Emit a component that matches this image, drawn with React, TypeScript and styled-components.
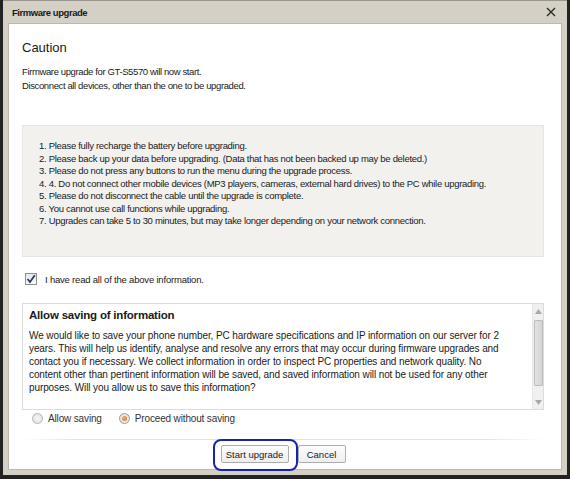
import React from 'react';
import styled, { createGlobalStyle } from 'styled-components';

const GlobalStyle = createGlobalStyle`
  html, body {
    margin: 0;
    padding: 0;
    background: #1f1f1f;
  }
  * {
    box-sizing: border-box;
  }
`;

const font = `"Liberation Sans", Arial, sans-serif`;

const Screen = styled.div`
  width: 570px;
  height: 479px;
  padding: 0 3px 4px 3px;
  background: #222222;
  font-family: ${font};
  color: #1a1a1a;
`;

const Frame = styled.div`
  display: flex;
  flex-direction: column;
  height: 100%;
  padding: 0 5px 5px 5px;
  background: #d5d0c6;
  border-top: 1px solid #9a968e;
`;

const TitleBar = styled.div`
  display: flex;
  align-items: center;
  justify-content: space-between;
  height: 22px;
  padding: 0 4px 0 4px;
  font-size: 9.5px;
  letter-spacing: -0.45px;
  font-weight: bold;
`;

const CloseButton = styled.button`
  display: flex;
  align-items: center;
  justify-content: center;
  width: 14px;
  height: 14px;
  padding: 0;
  border: none;
  background: transparent;
`;

const Content = styled.div`
  flex: 1;
  display: flex;
  flex-direction: column;
  padding: 0 17px 0 13px;
  background: #ffffff;
  border: 1px solid #bdb8ad;
`;

const Heading = styled.h1`
  margin: 15px 0 0 0;
  font-size: 13px;
  line-height: 18px;
  font-weight: normal;
`;

const Intro = styled.p`
  margin: 8px 0 0 0;
  font-size: 9.5px;
  letter-spacing: -0.38px;
  line-height: 14px;
`;

const NoticeBox = styled.ol`
  margin: 32px 0 0 0;
  height: 132px;
  padding: 14px 0 0 16px;
  list-style: none;
  background: #f2f1ee;
  border: 1px solid #e8e6e1;
  font-size: 9.5px;
  letter-spacing: -0.3px;
  line-height: 12.5px;
`;

const CheckRow = styled.label`
  display: flex;
  align-items: center;
  gap: 8px;
  height: 16px;
  margin: 14px 0 0 3px;
  font-size: 9.5px;
  letter-spacing: -0.2px;
`;

const CheckBox = styled.span`
  display: flex;
  align-items: center;
  justify-content: center;
  width: 12px;
  height: 12px;
  border: 1px solid #8f8f8f;
  background: linear-gradient(#e6e6e6, #fbfbfb);
`;

const InfoBox = styled.div`
  display: grid;
  grid-template-columns: 1fr 11px;
  height: 107px;
  margin-top: 16px;
  border: 1px solid #dcdcdc;
`;

const InfoText = styled.div`
  padding: 2px 8px 0 6px;
  overflow: hidden;
`;

const InfoTitle = styled.h2`
  margin: 0;
  font-size: 11.5px;
  letter-spacing: -0.2px;
  line-height: 18px;
  font-weight: bold;
`;

const InfoBody = styled.p`
  margin: 5px 0 0 0;
  font-size: 10px;
  letter-spacing: -0.1px;
  line-height: 13px;
  white-space: nowrap;
`;

const ScrollBar = styled.div`
  display: flex;
  flex-direction: column;
  align-items: center;
  background: #f0f0f0;
  border-left: 1px solid #e6e6e6;
`;

const ScrollArrow = styled.div`
  display: flex;
  align-items: center;
  justify-content: center;
  width: 100%;
  height: 14px;
`;

const ScrollThumb = styled.div`
  width: 9px;
  height: 66px;
  margin-top: 2px;
  background: linear-gradient(90deg, #e2e2e2, #d4d4d4);
  border: 1px solid #bcbcbc;
  border-radius: 1px;
`;

const ScrollTrack = styled.div`
  flex: 1;
`;

const RadioRow = styled.div`
  display: flex;
  align-items: center;
  height: 16px;
  margin-left: 10px;
  font-size: 10px;
  letter-spacing: -0.15px;
  color: #333333;
`;

const RadioOption = styled.label`
  display: flex;
  align-items: center;
  gap: 5px;
  margin-right: 17px;
`;

const Radio = styled.span<{ $checked?: boolean }>`
  display: flex;
  align-items: center;
  justify-content: center;
  width: 11px;
  height: 11px;
  border-radius: 50%;
  border: 1px solid ${(p) => (p.$checked ? '#9a9a9a' : '#b5b5b5')};
  background: radial-gradient(circle, #f6f6f6, #dedede);

  &::after {
    content: '';
    display: ${(p) => (p.$checked ? 'block' : 'none')};
    width: 5px;
    height: 5px;
    border-radius: 50%;
    background: radial-gradient(circle at 40% 35%, #f5b061, #d2731d);
  }
`;

const Separator = styled.hr`
  width: 100%;
  margin: 13px 0 0 0;
  border: none;
  height: 1px;
  background: linear-gradient(90deg, #ffffff, #e4e4e4 10%, #e4e4e4 90%, #ffffff);
`;

const ButtonRow = styled.div`
  display: flex;
  justify-content: center;
  gap: 9px;
  margin: 5px 0 0 0;
`;

const Highlight = styled.span`
  position: relative;
  display: flex;

  &::before {
    content: '';
    position: absolute;
    left: -8px;
    right: -9px;
    top: -6px;
    bottom: -8px;
    border: 2px solid #1a22b0;
    border-radius: 8px;
    pointer-events: none;
  }
`;

const Button = styled.button<{ $width: number }>`
  width: ${(p) => p.$width}px;
  height: 18px;
  padding: 0;
  font-family: ${font};
  font-size: 9.5px;
  color: #1a1a1a;
  background: linear-gradient(#fdfdfd, #eeeeee);
  border: 1px solid #adadad;
  border-radius: 2px;
`;

const notices = [
  '1. Please fully recharge the battery before upgrading.',
  '2. Please back up your data before upgrading. (Data that has not been backed up may be deleted.)',
  '3. Please do not press any buttons to run the menu during the upgrade process.',
  '4. 4. Do not connect other mobile devices (MP3 players, cameras, external hard drives) to the PC while upgrading.',
  '5. Please do not disconnect the cable until the upgrade is complete.',
  '6. You cannot use call functions while upgrading.',
  '7. Upgrades can take 5 to 30 minutes, but may take longer depending on your network connection.',
];

const infoLines = [
  'We would like to save your phone number, PC hardware specifications and IP information on our server for 2',
  'years. This will help us identify, analyse and resolve any errors that may occur during firmware upgrades and',
  'contact you if necessary. We collect information in order to inspect PC properties and network quality. No',
  'content other than pertinent information will be saved, and saved information will not be used for any other',
  'purposes. Will you allow us to save this information?',
];

export default function App() {
  return (
    <>
      <GlobalStyle />
      <Screen>
        <Frame>
          <TitleBar>
            <span>Firmware upgrade</span>
            <CloseButton aria-label="Close">
              <svg width="10" height="10" viewBox="0 0 10 10">
                <path d="M1 1 L9 9 M9 1 L1 9" stroke="#2b2b2b" strokeWidth="1.4" />
              </svg>
            </CloseButton>
          </TitleBar>
          <Content>
            <Heading>Caution</Heading>
            <Intro>
              Firmware upgrade for GT-S5570 will now start.
              <br />
              Disconnect all devices, other than the one to be upgraded.
            </Intro>
            <NoticeBox>
              {notices.map((n) => (
                <li key={n}>{n}</li>
              ))}
            </NoticeBox>
            <CheckRow>
              <CheckBox>
                <svg width="10" height="10" viewBox="0 0 10 10">
                  <path d="M1.5 5 L4 8 L8.8 1.2" fill="none" stroke="#2a3d6b" strokeWidth="1.8" />
                </svg>
              </CheckBox>
              I have read all of the above information.
            </CheckRow>
            <InfoBox>
              <InfoText>
                <InfoTitle>Allow saving of information</InfoTitle>
                <InfoBody>
                  {infoLines.map((l, i) => (
                    <React.Fragment key={i}>
                      {l}
                      {i < infoLines.length - 1 && <br />}
                    </React.Fragment>
                  ))}
                </InfoBody>
              </InfoText>
              <ScrollBar>
                <ScrollArrow>
                  <svg width="7" height="5" viewBox="0 0 7 5">
                    <path d="M0 5 L3.5 0 L7 5 Z" fill="#a8a8a8" />
                  </svg>
                </ScrollArrow>
                <ScrollThumb />
                <ScrollTrack />
                <ScrollArrow>
                  <svg width="7" height="5" viewBox="0 0 7 5">
                    <path d="M0 0 L3.5 5 L7 0 Z" fill="#a8a8a8" />
                  </svg>
                </ScrollArrow>
              </ScrollBar>
            </InfoBox>
            <RadioRow>
              <RadioOption>
                <Radio />
                Allow saving
              </RadioOption>
              <RadioOption>
                <Radio $checked />
                Proceed without saving
              </RadioOption>
            </RadioRow>
            <Separator />
            <ButtonRow>
              <Highlight>
                <Button $width={68}>Start upgrade</Button>
              </Highlight>
              <Button $width={48}>Cancel</Button>
            </ButtonRow>
          </Content>
        </Frame>
      </Screen>
    </>
  );
}
